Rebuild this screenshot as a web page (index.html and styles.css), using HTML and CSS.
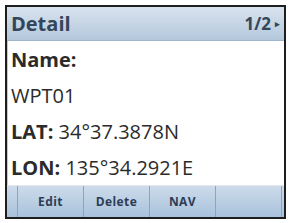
FILE: index.html
```html
<!DOCTYPE html>
<html lang="en">
<head>
    <meta charset="UTF-8">
    <meta name="viewport" content="width=device-width, initial-scale=1.0">
    <title>Detail</title>
    <link rel="stylesheet" href="styles.css">
</head>
<body>
    <div class="screen">
        <div class="titlebar">
            <span class="title">Detail</span>
            <span class="page">1/2<span class="arrow">&#9656;</span></span>
        </div>

        <div class="rows">
            <div class="row"><b>Name:</b></div>
            <div class="row">WPT01</div>
            <div class="row"><b>LAT:</b>&nbsp;34°37.3878N</div>
            <div class="row"><b>LON:</b>&nbsp;135°34.2921E</div>
        </div>

        <div class="softkeys">
            <div class="key edge"></div>
            <div class="key">Edit</div>
            <div class="key">Delete</div>
            <div class="key">NAV</div>
            <div class="key"></div>
            <div class="key edge right"></div>
        </div>
    </div>
</body>
</html>
```

FILE: styles.css
```css
body {
    font-family: 'Open Sans', 'Liberation Sans', sans-serif;
    margin: 0;
    padding: 5px;
    background: #fff;
    color: #2b2b2b;
}

.screen {
    width: 277px;
    height: 210px;
    border: 2px solid #1e1e1e;
    display: flex;
    flex-direction: column;
    background: #fff;
}

.titlebar {
    height: 33px;
    display: flex;
    align-items: center;
    justify-content: space-between;
    padding: 0 4px 0 4px;
    background: linear-gradient(to bottom, #d9e3ee, #b4c8dc);
    border-bottom: 1px solid #9fb6cc;
    color: #34465a;
    font-weight: bold;
}

.title {
    font-size: 20px;
}

.page {
    font-size: 17px;
    display: flex;
    align-items: center;
}

.arrow {
    font-size: 9px;
    margin-left: 4px;
}

.rows {
    flex: 1;
    display: flex;
    flex-direction: column;
    padding-left: 3px;
    border-left: 1px solid #c8c8c8;
}

.row {
    height: 36px;
    display: flex;
    align-items: center;
    font-size: 20px;
    white-space: pre;
}

.row b {
    font-weight: bold;
}

.softkeys {
    height: 31px;
    display: flex;
    background: linear-gradient(to bottom, #cddbea, #a9c2dc);
    border-top: 1px solid #e2e8ee;
}

.key {
    width: 65px;
    display: flex;
    align-items: center;
    justify-content: center;
    border-left: 1px solid #8fa4ba;
    font-size: 12px;
    font-weight: bold;
    letter-spacing: 0.4px;
    color: #2c3d56;
}

.key:first-child {
    border-left: none;
}

.key.edge {
    width: 10px;
}

.key.right {
    width: auto;
    flex: 1;
}
```
